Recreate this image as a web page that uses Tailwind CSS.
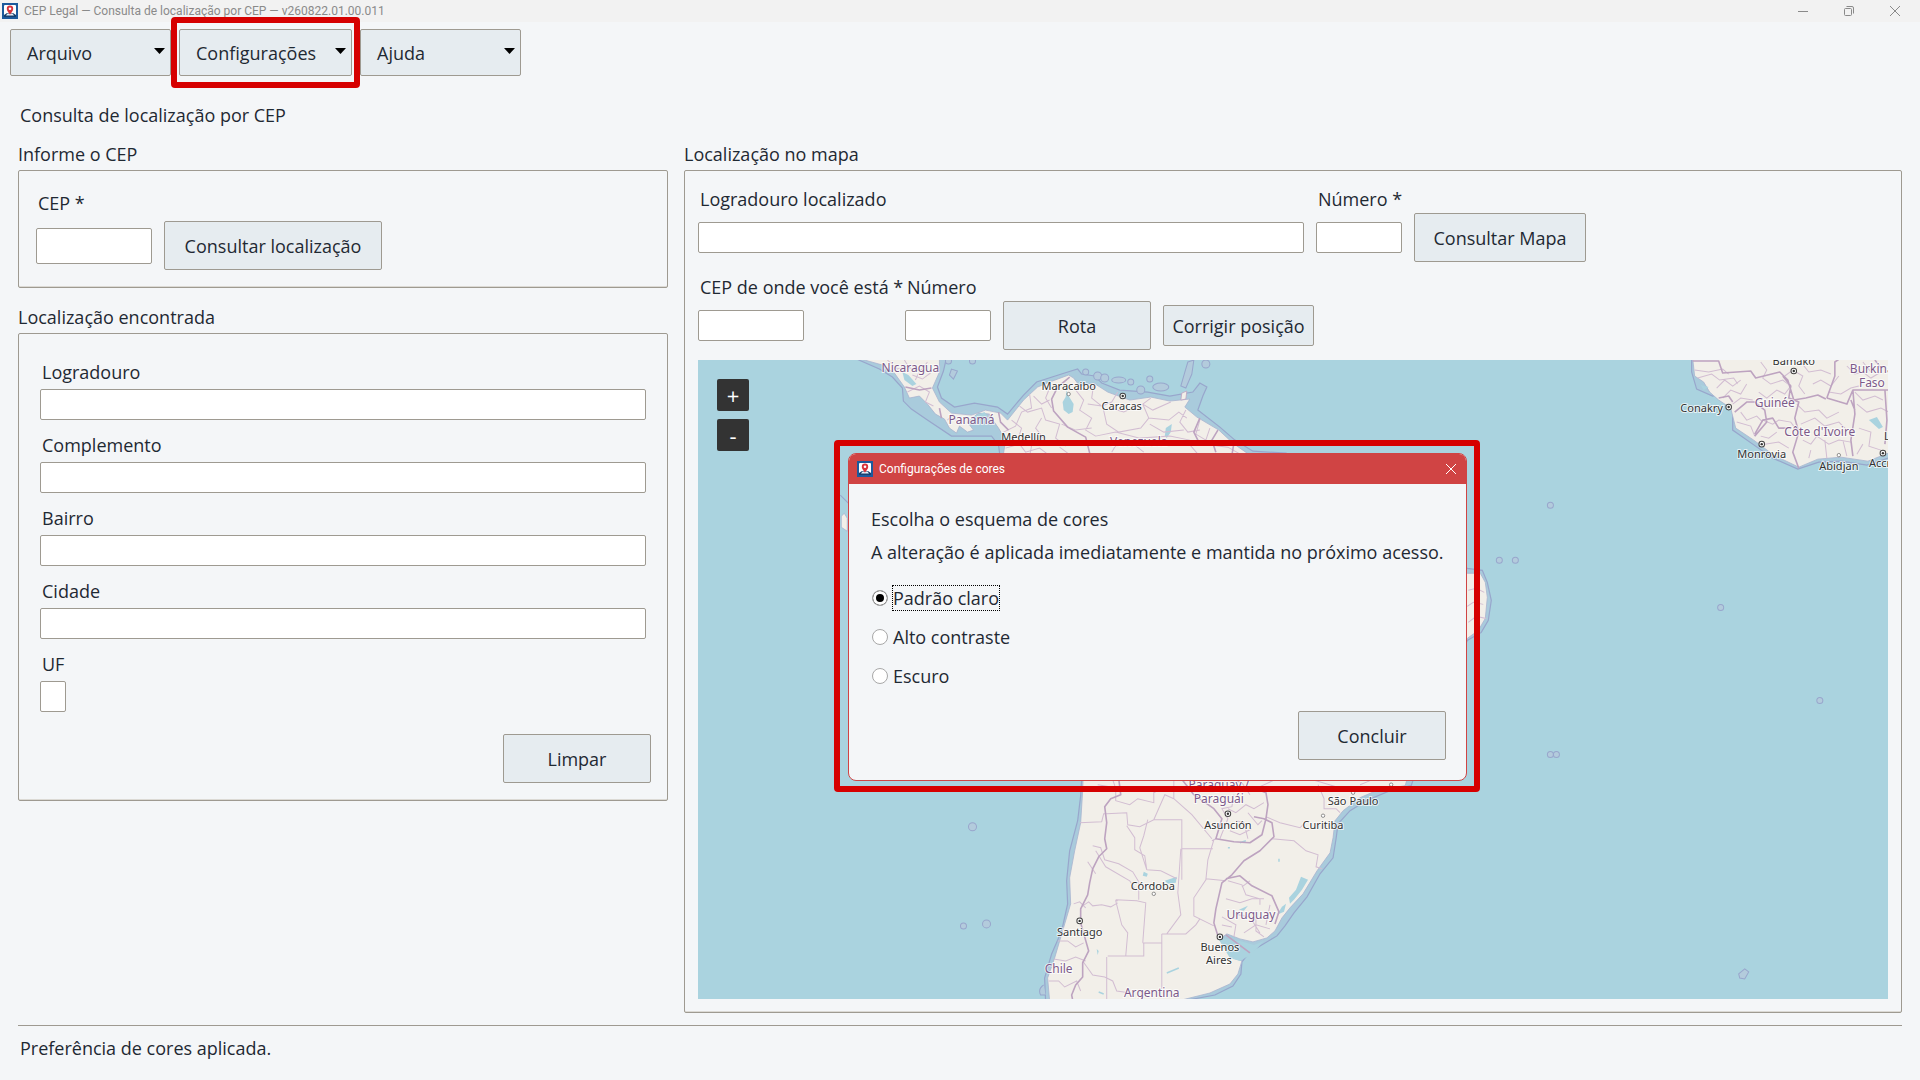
<!DOCTYPE html>
<html lang="pt-BR">
<head>
    <meta charset="UTF-8">
    <meta name="viewport" content="width=device-width, initial-scale=1.0">
    <title>CEP Legal — Consulta de localização por CEP</title>
    <!-- Tailwind CSS CDN -->
    <script src="https://cdn.jsdelivr.net/npm/@tailwindcss/browser@4"></script>
</head>
<body class="relative min-h-screen flex flex-col bg-[#f4f6f8] font-['Open_Sans','Noto_Sans',sans-serif] text-[18px] leading-6 text-[#1f2933]">

    <!-- Shared app icon -->
    <svg class="hidden">
        <symbol id="app-icon" viewBox="0 0 16 16">
            <rect width="16" height="16" fill="#1c5a9c"/>
            <rect x="2" y="2" width="12" height="11" rx="1" fill="#fff"/>
            <path d="M2 14v-2l3-2h6l3 2v2z" fill="#17406f"/>
            <path d="M4 12.500h8l-1.500-2h-5z" fill="#e8eef5"/>
            <path d="M8 2.500a3.200 3.200 0 0 0-3.200 3.200C4.800 8 8 11.500 8 11.500S11.200 8 11.200 5.700A3.200 3.200 0 0 0 8 2.500z" fill="#d8343c"/>
            <circle cx="8" cy="5.700" r="1.300" fill="#fff"/>
        </symbol>
    </svg>

    <!-- Window title bar -->
    <header class="h-[22px] flex items-center justify-between bg-[#f2f2f2] pl-0.5 pr-0.5 font-['Roboto','Noto_Sans',sans-serif] text-xs text-[#8a8a8a]">
        <div class="flex items-center gap-1.5">
            <svg class="size-4"><use href="#app-icon"/></svg>
            <span>CEP Legal — Consulta de localização por CEP — v260822.01.00.011</span>
        </div>
        <div class="flex items-center">
            <button type="button" aria-label="Minimizar" class="w-[46px] flex justify-center">
                <svg class="size-3" viewBox="0 0 12 12" fill="none" stroke="#8a8a8a"><path d="M1 6.500h10"/></svg>
            </button>
            <button type="button" aria-label="Restaurar" class="w-[46px] flex justify-center">
                <svg class="size-3" viewBox="0 0 12 12" fill="none" stroke="#8a8a8a"><rect x="1.500" y="3.500" width="7" height="7" rx="1"/><path d="M3.500 1.500h5.500a1.500 1.500 0 0 1 1.500 1.500v5.500"/></svg>
            </button>
            <button type="button" aria-label="Fechar" class="w-[46px] flex justify-center">
                <svg class="size-3" viewBox="0 0 12 12" fill="none" stroke="#8a8a8a"><path d="M1 1l10 10M11 1L1 11"/></svg>
            </button>
        </div>
    </header>

    <!-- Menu -->
    <nav class="flex gap-2 pl-2.5 pt-[7px]">
        <button type="button" class="w-[161px] h-[47px] flex items-center justify-between pl-4 pr-[5px] bg-[#e6ecf0] border border-[#9e9a91] rounded-xs">
            Arquivo
            <svg class="w-[11px] h-1.5 mb-1" viewBox="0 0 11 6"><path d="M0 0h11L5.500 6z"/></svg>
        </button>
        <div class="relative">
            <button type="button" class="w-[173px] h-[47px] flex items-center justify-between pl-4 pr-[5px] bg-[#e6ecf0] border border-[#9e9a91] rounded-xs">
                Configurações
                <svg class="w-[11px] h-1.5 mb-1" viewBox="0 0 11 6"><path d="M0 0h11L5.500 6z"/></svg>
            </button>
            <div class="absolute -inset-x-2 -inset-y-3 z-10 border-6 border-[#d60000] rounded-sm pointer-events-none"></div>
        </div>
        <button type="button" class="w-[161px] h-[47px] flex items-center justify-between pl-4 pr-[5px] bg-[#e6ecf0] border border-[#9e9a91] rounded-xs">
            Ajuda
            <svg class="w-[11px] h-1.5 mb-1" viewBox="0 0 11 6"><path d="M0 0h11L5.500 6z"/></svg>
        </button>
    </nav>

    <h1 class="mt-[27px] pl-5">Consulta de localização por CEP</h1>

    <main class="flex-1 mt-[15px] px-[18px] grid grid-cols-[650fr_1218fr] gap-x-4">
        <div>
            <!-- CEP search -->
            <h2>Informe o CEP</h2>
            <form class="mt-1 px-[17px] pt-5 pb-[17px] border border-[#9e9a91] rounded-xs shadow-[inset_0_-1px_0_#dcdad5]">
                <label for="cep" class="block pl-0.5">CEP *</label>
                <div class="mt-1.5 flex items-center gap-3">
                    <input id="cep" type="text" class="w-[116px] h-9 px-2 bg-white border border-[#9e9a91] rounded-xs">
                    <button type="button" class="w-[218px] h-[49px] bg-[#e6ecf0] border border-[#9e9a91] rounded-xs">Consultar localização</button>
                </div>
            </form>

            <!-- Address found -->
            <h2 class="mt-[17px]">Localização encontrada</h2>
            <form class="mt-1 px-4 pt-[26px] pb-[17px] border border-[#9e9a91] rounded-xs shadow-[inset_0_-1px_0_#dcdad5]">
                <div class="mx-[5px] grid gap-y-[13px]">
                    <div>
                        <label for="logradouro" class="block pl-0.5">Logradouro</label>
                        <input id="logradouro" type="text" class="block mt-[5px] w-full h-[31px] px-2 bg-white border border-[#9e9a91] rounded-xs">
                    </div>
                    <div>
                        <label for="complemento" class="block pl-0.5">Complemento</label>
                        <input id="complemento" type="text" class="block mt-[5px] w-full h-[31px] px-2 bg-white border border-[#9e9a91] rounded-xs">
                    </div>
                    <div>
                        <label for="bairro" class="block pl-0.5">Bairro</label>
                        <input id="bairro" type="text" class="block mt-[5px] w-full h-[31px] px-2 bg-white border border-[#9e9a91] rounded-xs">
                    </div>
                    <div>
                        <label for="cidade" class="block pl-0.5">Cidade</label>
                        <input id="cidade" type="text" class="block mt-[5px] w-full h-[31px] px-2 bg-white border border-[#9e9a91] rounded-xs">
                    </div>
                    <div>
                        <label for="uf" class="block pl-0.5">UF</label>
                        <input id="uf" type="text" maxlength="2" class="block mt-[5px] w-[26px] h-[31px] bg-white border border-[#9e9a91] rounded-xs">
                    </div>
                </div>
                <div class="mt-[22px] flex justify-end">
                    <button type="reset" class="w-[148px] h-[49px] bg-[#e6ecf0] border border-[#9e9a91] rounded-xs">Limpar</button>
                </div>
            </form>
        </div>

        <!-- Map -->
        <div class="flex flex-col">
            <h2>Localização no mapa</h2>
            <section class="flex-1 flex flex-col mt-1 px-[13px] pt-4 pb-[13px] border border-[#9e9a91] rounded-xs shadow-[inset_0_-1px_0_#dcdad5]">
                <form class="grid grid-cols-[606px_86px_172px] gap-x-3 gap-y-0.5 items-center">
                    <label for="localizado" class="pl-0.5">Logradouro localizado</label>
                    <label for="numero-mapa" class="col-span-2 pl-0.5">Número *</label>
                    <input id="localizado" type="text" class="h-[31px] min-w-0 px-2 bg-white border border-[#9e9a91] rounded-xs">
                    <input id="numero-mapa" type="text" class="h-[31px] min-w-0 px-2 bg-white border border-[#9e9a91] rounded-xs">
                    <button type="button" class="h-[49px] bg-[#e6ecf0] border border-[#9e9a91] rounded-xs">Consultar Mapa</button>
                </form>
                <form class="mt-[13px] grid grid-cols-[195px_86px_148px_151px] gap-x-3 gap-y-0.5 items-center">
                    <label for="cep-origem" class="pl-0.5 whitespace-nowrap">CEP de onde você está *</label>
                    <label for="numero-origem" class="col-span-3 pl-0.5">Número</label>
                    <input id="cep-origem" type="text" class="w-[106px] h-[31px] px-2 bg-white border border-[#9e9a91] rounded-xs">
                    <input id="numero-origem" type="text" class="h-[31px] min-w-0 px-2 bg-white border border-[#9e9a91] rounded-xs">
                    <button type="button" class="h-[49px] bg-[#e6ecf0] border border-[#9e9a91] rounded-xs">Rota</button>
                    <button type="button" class="h-[41px] whitespace-nowrap bg-[#e6ecf0] border border-[#9e9a91] rounded-xs">Corrigir posição</button>
                </form>

                <div class="relative flex-1 min-h-[400px] mt-2.5 bg-[#aad3df] overflow-hidden">
                    <svg class="absolute inset-0 w-full h-full" viewBox="698 360 1190 638" preserveAspectRatio="xMidYMid slice" role="img" aria-label="Mapa da América do Sul">
                        <!-- Territorial waters -->
                        <g fill="#a9cbdc" stroke="#98a6cc" stroke-width="1.200">
                            <path d="M855 358L880 369L893 377L903 388L904 401L912 409L928 420L952 436L992 436L999 445L1001 460L1001 600L1083 760L1081 795L1078 820L1070 850L1067 880L1068 903L1062 930L1052 953L1045 977L1046 1000L1183 1000L1215 994L1233 985L1241 973L1242 961L1250 951L1277 935L1285 925L1294 912L1307 896L1320 873L1333 857L1336 838L1338 823L1350 810L1366 800L1390 790L1411 785L1440 700L1467 640L1481 632L1488 620L1491 600L1487 582L1482 570L1467 568L1400 520L1286 453L1253 451L1235 440L1220 427L1198 410L1203 396L1207 387L1200 383L1193 392L1170 396L1148 392L1120 390L1102 383L1095 376L1082 374L1078 369L1065 373L1037 382L1024 395L1008 414L998 407L975 403L955 407L942 398L938 387L944 371L947 358Z"/>
                            <path d="M1691 358L1691 372L1696 389L1712 396L1716 395L1732 410L1732 430L1752 444L1772 458L1797 469L1818 462L1840 461L1866 465L1890 457L1890 358Z"/>
                        </g>
                        <!-- Land -->
                        <g fill="#f2efe9" stroke="#a9b4cf" stroke-width=".8">
                            <path d="M858 358L883 365L895 373L905 387L910 398L920 396L928 404L936 414L945 419L950 428L957 433L960 426L968 432L974 430L968 422L979 413L990 414L994 421L999 428L1006 440L1003 460L1003 600L1084 760L1083 790L1081 822L1075 850L1070 877L1071 903L1063 930L1055 957L1048 977L1050 1000L1178 1000L1210 992L1230 983L1238 973L1242 960L1233 957L1230 945L1220 938L1227 933L1240 938L1253 941L1267 937L1275 930L1282 917L1290 907L1303 893L1317 870L1330 852L1333 837L1335 820L1343 810L1360 797L1376 790L1405 785L1430 700L1467 638L1478 630L1485 618L1487 597L1485 582L1480 573L1467 573L1400 530L1280 460L1250 455L1233 443L1219 430L1197 417L1185 407L1190 399L1170 401L1151 397L1130 400L1108 392L1094 383L1080 386L1074 378L1069 375L1050 382L1038 387L1024 400L1008 420L1001 413L986 410L972 415L952 413L940 402L933 388L940 372L940 358Z"/>
                            <path d="M1692 358L1694 376L1703 382L1709 392L1718 400L1730 408L1735 428L1753 440L1773 455L1798 467L1817 459L1840 457L1867 461L1890 452L1890 358Z"/>
                            <path d="M842 516l3-3 3 5v13l-6-4z"/>
                        </g>
                        <!-- Lakes and bays -->
                        <g fill="#aad3df">
                            <path d="M903 372l6 3 8 9 -4 2 -8-6z"/>
                            <path d="M1067 390l2 6 5 8 -1 8 -4 2 -5-4 -1-8 3-5z"/>
                            <path d="M1166 428l6-4 -1 8 -4 6 -2-2z"/>
                            <path d="M973 417l12-5 4 6 -8 6 -7-1z"/>
                            <path d="M1301 876l7 3 -6 10 -8 10 -4 4 -1-6 7-8z"/>
                            <path d="M1282 906l4-3 -2 8 -7 3z"/>
                            <path d="M1165 880l12-4 -1 6 -8 1z"/>
                            <path d="M1144 871l4 2 -1 3 -4-1z"/>
                            <path d="M1218 937l10 1 12 2 14 4 10-4 -12 13 -12 7 -10-3z"/>
                            <path d="M1239 909l9-4 -4 5z"/>
                            <path d="M1097 948l2 2 -1 4z"/>
                            <path d="M1700 385l8 2 -5 3z"/>
                            <path d="M1868 420l8-3 6 10 -4 2z"/>
                        </g>
                        <path d="M1167 972l12-5M1099 991l5 2M1240 842l6-2M1279 858v3M1228 847h2" fill="none" stroke="#aad3df" stroke-width="1.500"/>
                        <!-- State lines -->
                        <g fill="none" stroke="#d2bdd2" stroke-width="1">
                            <path d="M888 360l10 9 14-4 8 6 -4 9M905 360l5 8 12 2 6-8M913 375l10 4 8-6M908 392l12-6 10 6 -4 10 8 4"/>
                            <path d="M948 420l6-6M958 424l-3-9M990 414l-4 8M1004 432l12-6 6-14 10-4 -2-14M1012 420l10 8 -4 12 14 6 -2 10M1020 406l8 6 14-4 4 12 14 4 -4 14 10 8M1034 396l8 8 8-4M1042 418l-6 10 8 10M1050 388l-4 10 6 10"/>
                            <path d="M1076 390l8 10 -4 10 12 8 -6 12 10 6M1094 384l-2 14 10 8 10-4 6-10M1088 404l14 2M1103 406l4 18 12 8 22-4 8-10 -6-14 8-6M1110 408l14 4 14-6M1143 404l10 6 18-8M1149 418l20 2 10-8 8 6M1096 436l20 -4 24 6 30-2 20 4M1062 424l14 6 16-2M1150 424l14 8 20-2M1112 452l6-10 16 2 10 8M1186 410l-6 12 8 10 12-2M1200 420l-4 14 10 6M1210 428l-4 12"/>
                            <path d="M1006 448l14-4 6 8 14-4 8 6M1060 447l8 6M1186 440l12 14M1212 445l16 2 14 8"/>
                            <path d="M1080 822l22-1 2-8 3 0M1107 813l20-1 1 12 12 2 14-7 7 0 0 0 21 0 0 60M1127 825l8 12 0 12 10 6 2 14M1148 819l-4 16 -4 12 7 22M1154 819l11-25 9 4 18 16 20 24M1174 770v28M1182 848h31M1181 848l-3 44 3 22 -14 19M1147 869l14 1 16 8M1093 845l8 2 4 12 14 4 14 8 6 10 0 18M1088 861l8 12M1096 850l10 16 24 14 6 10M1116 899l21 1 9 2 -3 40M1118 900l-2 0 6 24 6 8 -2 23M1143 942h19M1162 933v55M1162 933h24l10-9 4-6M1108 955h18l18 0 0-13M1107 956v44M1083 905l6 -4 4 4 9-1 9 2 7-4M1074 903l6-2 6 6M1058 940l10 0 8 6 8-4M1054 958l12 2 10-4 10 4M1049 980l10 0 6 6 12-6 4 10M1083 960l10 14 12 2 8 4 4 10 14 2"/>
                            <path d="M1212 840l4-2M1214 839l-6 20 -2 20 -12 18 0 18 20 10M1206 878l20 2M1220 838l8 -20 -6-10 10-2 2-12M1228 808l8 4 10-8 8 4 10-6M1236 820l8 2 4 16M1248 812l10 12 4-4M1230 830l10 4 12-6M1222 776l20 6 8 12M1266 816l14 6 20 5 4-4M1272 838l22 2 12 10 12 4 -2 12 6 2M1318 784l6 14 0 10 12 0 4 4M1260 786l26-12 30 6 20 6M1360 784l10-4"/>
                            <path d="M1228 880l14 4 4 10 14 4 0 6M1226 898l14 4 12-4 12 0M1222 916l14 8 -2 12M1238 914l12 2 10 16M1256 910l0 20 8 6M1270 904l-4 20M1244 932l12-8 14 4M1242 886l8 -6M1222 924l10 2"/>
                            <path d="M1112 776l4 12 0 12 14 4 8-6 16 4 0-10 8-4M1098 784l12 2"/>
                            <path d="M1468 590l8-2 8 4M1467 606l6-4 10 2M1468 622l8-6 10 2"/>
                            <path d="M1694 370l14 2 14-3 6 5M1697 378l14-4 8 6 14-2 4 6M1716 388l8-8 8 6 8-6M1722 398l8-8 10 4 6-10M1732 404l8-6 12 2M1740 412l6 8 10-4 6 6M1736 422l14 4 4 10M1760 362l6 8 -4 8 8 6 12-4 8 6M1758 392l8 6 10-8 8 4 6-8M1762 420l10 4 6-4 12 2 6 8M1784 376l8-6 10 6 -4 10 6 8M1800 362l8 10 12-2 10 4M1812 384l8-4 10 6 8-10M1828 392l12 2 10-6 8-2M1846 366l8 8 8-2 8 6 10-6M1862 362l8 10M1854 392l8 8 12-4 8 4M1856 404l10 8 14-4 8 4M1796 404l8 8 14-2 8 8 12-6M1800 424l14-6 10 8 14-4 8 8M1802 440l8 4 6-8 12 8 10-4 12 2M1810 450l-2 8M1824 440l2 18M1842 440l4 16M1858 428l12 4 -2 14 12 4M1862 444l-6 10M1760 436l8 2 8-6M1764 444l14-2 10 6M1776 452l8 2"/>
                        </g>
                        <!-- Country lines -->
                        <g fill="none" stroke="#bda3c0" stroke-width="1.600" stroke-linejoin="round">
                            <path d="M906 387l14 3 12-2M940 408l2 10M999 412l2 10 8 8M1070 377l-12 10 -6 12 2 12 14 16 18 10 4 16M1200 418l-6 14 6 12M1218 430l-6 10 4 12M1234 443l-2 12"/>
                            <path d="M1119 778l2 16 -10 4 -6 8 2 16 -2 16 2 10 -8 8 -6 12 -3 14 -2 12 -7 14 0 14 4 14 4 14 -6 12 0 14 -7 8 -4 10 2 10 -2 12"/>
                            <path d="M1180 776l14 18 20 14 8 10 -6 20 18 3 16 1 12-8 4-16 2-14 -2-12 -10-4 -14 2M1254 816l10 2 8 4 2 14 -14 14 -16 10 -12 14 -10 8 -6 26 -2 14 5 16M1226 878l14-3 12 10 20 10 7 16 -4 12"/>
                            <path d="M1692 361l26 0 4 12 28-2 5 7 24-6 8 8 6 20 12-2 12-3 8 4M1782 376l8 10 -2 12 10 4 -4 16 4 14 -6 20 6 16M1718 398l10-2 4 6M1734 412l12-10 8 0 10 8 2 12 -12 14M1754 434l8-14 10-2 6 10 12 0M1826 398l8-22 0-14 6-4M1826 398l20 6 6-14 36 0M1852 390l2 24 -4 26 2 16M1850 400l4 10M1874 360l6 8M1884 390l2 30 -2 24"/>
                            <path d="M1226 934l24 18"/>
                        </g>
                        <!-- Islands -->
                        <g fill="#b3cbdc" stroke="#98a6cc" stroke-width="1">
                            <path d="M950 375l2-6 6 2 -4 8zM1188 362l6-2 -2 14 -6 14 -5-2 4-14z"/>
                            <circle cx="949" cy="361" r="3"/><circle cx="973" cy="361" r="3"/>
                            <circle cx="1086" cy="372" r="3"/><circle cx="1098" cy="376" r="4"/><circle cx="1105" cy="378" r="4"/>
                            <ellipse cx="1119" cy="380" rx="7" ry="3"/><circle cx="1131" cy="382" r="3"/><circle cx="1150" cy="379" r="3"/>
                            <circle cx="1141" cy="390" r="4"/><ellipse cx="1161" cy="387" rx="8" ry="4"/><circle cx="1206" cy="364" r="4"/>
                            <circle cx="1550" cy="505" r="3"/><circle cx="1499" cy="560" r="3"/><circle cx="1515" cy="560" r="3"/>
                            <circle cx="1720" cy="607" r="3"/><circle cx="1819" cy="700" r="3"/>
                            <circle cx="1550" cy="754" r="3"/><circle cx="1556" cy="754" r="3"/>
                            <circle cx="973" cy="826" r="4"/><circle cx="964" cy="925" r="3"/><circle cx="987" cy="923" r="4"/>
                            <path d="M1738 973l6-5 4 3 -4 7 -5-1zM841 495l8 8M1044 984q-6 4-3 10l5 0"/>
                        </g>
                        <path d="M1182 393l5-2 -1 8 -5 1z" fill="#f2efe9" stroke="#bda3c0" stroke-width=".8"/>

                        <!-- Capitals and cities -->
                        <g fill="#fff" stroke="#444" stroke-width="1">
                            <circle cx="1123" cy="396" r="2.800"/><circle cx="1728" cy="407" r="2.800"/><circle cx="1761" cy="444" r="2.800"/>
                            <circle cx="1793" cy="371" r="2.800"/><circle cx="1882" cy="453" r="2.800"/><circle cx="1228" cy="813" r="2.800"/>
                            <circle cx="1080" cy="920" r="2.800"/><circle cx="1220" cy="936" r="2.800"/>
                        </g>
                        <g fill="#333">
                            <circle cx="1123" cy="396" r="1.200"/><circle cx="1728" cy="407" r="1.200"/><circle cx="1761" cy="444" r="1.200"/>
                            <circle cx="1793" cy="371" r="1.200"/><circle cx="1882" cy="453" r="1.200"/><circle cx="1228" cy="813" r="1.200"/>
                            <circle cx="1080" cy="920" r="1.200"/><circle cx="1220" cy="936" r="1.200"/>
                        </g>
                        <g fill="#fff" stroke="#777" stroke-width=".8">
                            <circle cx="1069" cy="394" r="1.700"/><circle cx="1838" cy="455" r="1.700"/><circle cx="1154" cy="893" r="1.700"/>
                            <circle cx="1323" cy="815" r="1.700"/><circle cx="1353" cy="792" r="1.700"/><circle cx="1391" cy="784" r="1.700"/>
                        </g>

                        <!-- City names -->
                        <g font-family="Noto Sans, sans-serif" font-size="11" text-anchor="middle" fill="#333" stroke="#fff" stroke-opacity=".7" stroke-width="2" paint-order="stroke">
                            <text x="1069" y="390">Maracaibo</text>
                            <text x="1122" y="410">Caracas</text>
                            <text x="1024" y="441">Medellín</text>
                            <text x="1228" y="828">Asunción</text>
                            <text x="1353" y="804">São Paulo</text>
                            <text x="1323" y="828">Curitiba</text>
                            <text x="1153" y="889">Córdoba</text>
                            <text x="1080" y="935">Santiago</text>
                            <text x="1220" y="950">Buenos</text>
                            <text x="1219" y="963">Aires</text>
                            <text x="1793" y="365">Bamako</text>
                            <text x="1701" y="412">Conakry</text>
                            <text x="1761" y="458">Monrovia</text>
                            <text x="1838" y="470">Abidjan</text>
                            <text x="1868" y="467" text-anchor="start">Accra</text>
                            <text x="1883" y="440" text-anchor="start">Lomé</text>
                        </g>
                        <!-- Country names -->
                        <g font-family="Noto Sans, sans-serif" font-size="12" text-anchor="middle" fill="#7d5a8a" stroke="#fff" stroke-opacity=".7" stroke-width="2" paint-order="stroke">
                            <text x="911" y="372">Nicaragua</text>
                            <text x="972" y="424">Panamá</text>
                            <text x="1139" y="446">Venezuela</text>
                            <text x="1219" y="788">Paraguay /</text>
                            <text x="1219" y="802">Paraguái</text>
                            <text x="1251" y="918">Uruguay</text>
                            <text x="1059" y="972">Chile</text>
                            <text x="1152" y="996">Argentina</text>
                            <text x="1774" y="407">Guinée</text>
                            <text x="1819" y="436">Côte d'Ivoire</text>
                            <text x="1849" y="373" text-anchor="start">Burkina</text>
                            <text x="1871" y="387">Faso</text>
                        </g>
                    </svg>
                    <!-- Zoom controls -->
                    <div class="absolute left-[19px] top-[19px] flex flex-col gap-2 text-[22px]">
                        <button type="button" class="size-8 rounded-xs bg-[#333333] text-white">+</button>
                        <button type="button" class="size-8 rounded-xs bg-[#333333] text-white">-</button>
                    </div>
                </div>
            </section>
        </div>
    </main>

    <!-- Status bar -->
    <footer class="mx-[18px] mt-3 pt-2.5 pb-5 pl-0.5 border-t border-[#9e9a91]">Preferência de cores aplicada.</footer>

    <!-- Color settings dialog -->
    <div class="absolute left-[834px] top-[440px] w-[646px] border-6 border-[#d60000] rounded-sm pl-2 pr-[7px] pt-[7px] pb-[5px]">
        <div role="dialog" aria-labelledby="dialog-title" class="bg-[#f4f6f8] border border-[#d04444] rounded-lg overflow-hidden">
            <div class="h-[30px] flex items-center justify-between bg-[#d04444] pl-2 pr-[9px] font-['Roboto','Noto_Sans',sans-serif] text-xs text-white">
                <div class="flex items-center gap-1.5">
                    <svg class="size-4"><use href="#app-icon"/></svg>
                    <span id="dialog-title">Configurações de cores</span>
                </div>
                <button type="button" aria-label="Fechar">
                    <svg class="size-3" viewBox="0 0 12 12" fill="none" stroke="#fff"><path d="M1 1l10 10M11 1L1 11"/></svg>
                </button>
            </div>
            <form class="pl-[22px] pr-5 pt-[23px] pb-5">
                <p>Escolha o esquema de cores</p>
                <p class="mt-[9px] whitespace-nowrap">A alteração é aplicada imediatamente e mantida no próximo acesso.</p>
                <div class="mt-[22px] pl-px flex flex-col gap-[15px]">
                    <div class="flex items-center gap-[5px]">
                        <input id="claro" type="radio" name="esquema" checked class="appearance-none size-4 rounded-full bg-white border border-[#a8a8a8] checked:bg-black checked:shadow-[inset_0_0_0_3px_#fff]">
                        <label for="claro" class="outline-1 outline-dotted outline-black">Padrão claro</label>
                    </div>
                    <div class="flex items-center gap-[5px]">
                        <input id="contraste" type="radio" name="esquema" class="appearance-none size-4 rounded-full bg-white border border-[#a8a8a8] checked:bg-black checked:shadow-[inset_0_0_0_3px_#fff]">
                        <label for="contraste">Alto contraste</label>
                    </div>
                    <div class="flex items-center gap-[5px]">
                        <input id="escuro" type="radio" name="esquema" class="appearance-none size-4 rounded-full bg-white border border-[#a8a8a8] checked:bg-black checked:shadow-[inset_0_0_0_3px_#fff]">
                        <label for="escuro">Escuro</label>
                    </div>
                </div>
                <div class="mt-[23px] flex justify-end">
                    <button type="button" class="w-[148px] h-[49px] bg-[#e6ecf0] border border-[#9e9a91] rounded-xs">Concluir</button>
                </div>
            </form>
        </div>
    </div>
</body>
</html>
